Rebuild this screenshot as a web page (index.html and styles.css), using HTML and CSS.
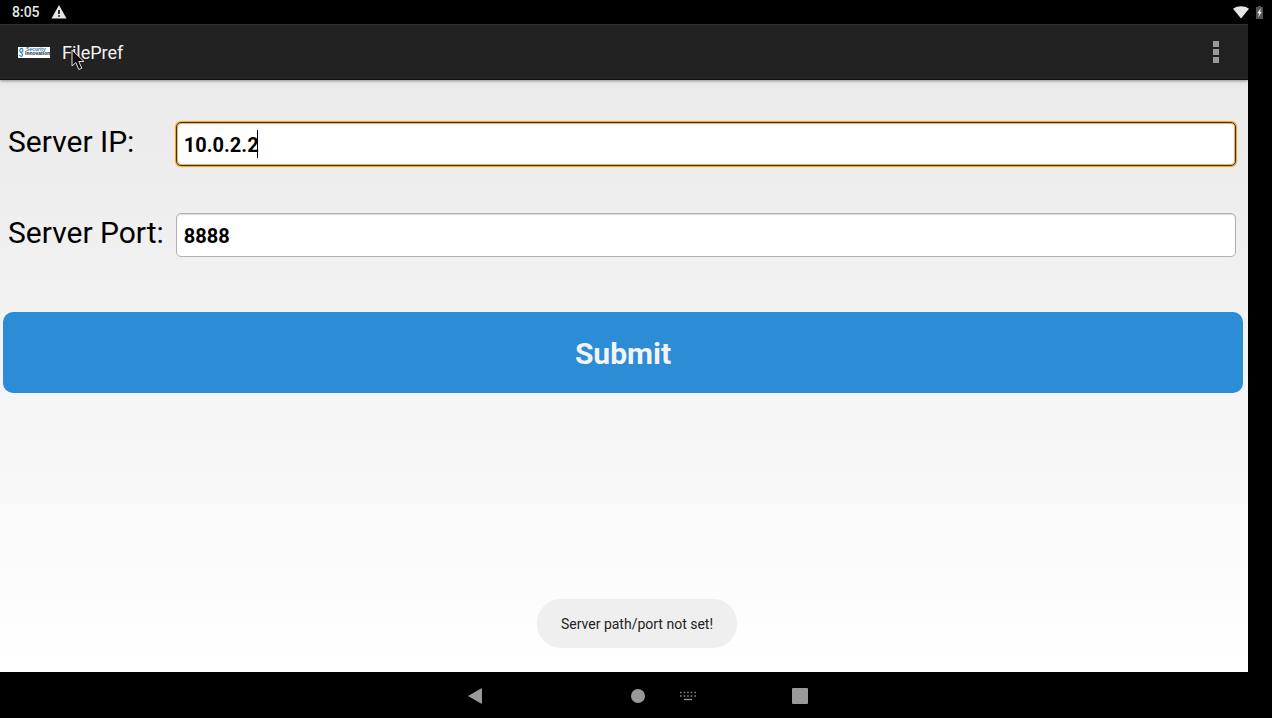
FILE: index.html
```html
<!DOCTYPE html>
<html lang="en">
<head>
  <meta charset="UTF-8" />
  <meta name="viewport" content="width=device-width, initial-scale=1.0" />
  <title>FilePref</title>
  <link rel="stylesheet" href="styles.css">
</head>
<body>
  <div class="status-bar">
    <span class="clock">8:05</span>
    <svg class="warning" width="16" height="14" viewBox="0 0 16 14">
      <path fill="#e6e6e6" fill-rule="evenodd" d="M8 0L15.500 13.500H.5zM7.200 5v4h1.600V5zM7.200 10.200v1.600h1.600v-1.600z"/>
    </svg>
    <svg class="wifi" width="16" height="13" viewBox="0 0 16 13">
      <path fill="#e6e6e6" d="M0 2.800C4.500-.5 11.500-.5 16 2.800L8 12.500z"/>
    </svg>
    <svg class="battery" width="7" height="13" viewBox="0 0 7 13">
      <path fill="#555" d="M2 0h3v1h2v12H0V1h2z"/>
      <path fill="#eee" d="M4.800 2L1.200 7.300h1.800L2.300 11.500l3.500-5.700H4z"/>
    </svg>
  </div>

  <div class="app">
    <header class="action-bar">
      <svg class="logo" width="32" height="11" viewBox="0 0 32 11">
        <rect width="32" height="11" fill="#fff"/>
        <path fill="none" stroke="#2581bd" stroke-width="1.200" d="M5 1.500C2.500.8 1 3 2.200 4.600S5 6.500 4.500 8.200 2 9.500 1.500 7.800M2.500 5.500C5.500 5 5.500 2.500 4 2.500"/>
        <text class="logo-top" x="8" y="4">Security</text>
        <text class="logo-bottom" x="7" y="8">Innovation</text>
      </svg>
      <h1>FilePref</h1>
      <button class="menu" aria-label="More options">
        <svg width="6" height="22" viewBox="0 0 6 22">
          <path fill="#999" d="M0 0h6v6H0zM0 8h6v6H0zM0 16h6v6H0z"/>
        </svg>
      </button>
      <svg class="pointer" width="15" height="22" viewBox="0 0 15 22">
        <path fill="#111" stroke="#ddd" d="M1 1v16l3.800-3.500 3 7 3-1.300-3-6.700H13z"/>
      </svg>
    </header>

    <form class="prefs" onsubmit="return false">
      <div class="fields">
        <label for="ip">Server IP:</label>
        <div class="field">
          <input class="focused" type="text" id="ip" value="10.0.2.2">
          <span class="caret"></span>
        </div>
        <label for="port">Server Port:</label>
        <div class="field">
          <input type="text" id="port" value="8888">
        </div>
      </div>
      <button class="submit">Submit</button>
    </form>
  </div>

  <nav class="nav-bar">
    <div class="toast" role="status">Server path/port not set!</div>
    <button class="back" aria-label="Back">
      <svg width="24" height="24" viewBox="0 0 24 24"><path fill="#999" d="M4 12L17 4.500Q18 4 18 5v14q0 1-1 .5z"/></svg>
    </button>
    <button class="home" aria-label="Home">
      <svg width="24" height="24" viewBox="0 0 24 24"><circle cx="12" cy="12" r="7" fill="#999"/></svg>
    </button>
    <button class="keyboard" aria-label="Keyboard">
      <svg width="24" height="24" viewBox="0 0 24 24">
        <path stroke="#888" stroke-width="1.500" stroke-dasharray="1.500 2.100" d="M4 8.500h16M4 12h16"/>
        <path stroke="#999" stroke-width="1.300" d="M8 15.500h8"/>
      </svg>
    </button>
    <button class="recents" aria-label="Recent apps">
      <svg width="24" height="24" viewBox="0 0 24 24"><rect x="4" y="4" width="16" height="16" rx="1" fill="#999"/></svg>
    </button>
  </nav>
</body>
</html>
```
FILE: styles.css
```css
* {
  box-sizing: border-box;
}
body {
  margin: 0;
  min-height: 100vh;
  display: flex;
  flex-direction: column;
  background: #000;
  font-family: Roboto, sans-serif;
}
button {
  padding: 0;
  border: none;
  background: none;
  font-family: inherit;
  cursor: pointer;
}
svg {
  display: block;
}

/* status bar */
.status-bar {
  display: flex;
  align-items: center;
  height: 24px;
  padding: 0 9px 0 12px;
  color: #e6e6e6;
}
.clock {
  font-size: 14px;
  font-weight: 500;
}
.warning {
  margin-left: 11px;
}
.wifi {
  margin-left: auto;
  margin-right: 7px;
}

/* app window */
.app {
  flex: 1;
  display: flex;
  flex-direction: column;
  margin-right: 24px;
  background: linear-gradient(#e8e8e8, #fff);
}
.action-bar {
  position: relative;
  display: flex;
  align-items: center;
  height: 56px;
  padding: 0 29px 0 18px;
  background: #222;
  border-top: 1px solid #303030;
  border-bottom: 1px solid #111;
  box-shadow: 0 1px 3px rgba(0,0,0,0.4);
}
.action-bar h1 {
  margin: 0 0 0 12px;
  font-size: 18px;
  font-weight: 400;
  color: #f3f3f3;
}
.logo-top,
.logo-bottom {
  font-family: "Liberation Sans", sans-serif;
  font-size: 5px;
  font-weight: bold;
}
.logo-top {
  fill: #2581bd;
}
.logo-bottom {
  fill: #222;
}
.menu {
  margin-left: auto;
}
.pointer {
  position: absolute;
  left: 71px;
  top: 24px;
}

/* form */
.prefs {
  padding: 42px 5px 0 3px;
}
.fields {
  display: grid;
  grid-template-columns: auto 1fr;
  column-gap: 12px;
  row-gap: 47px;
  padding: 0 7px 0 5px;
}
.fields label {
  font-size: 30px;
  line-height: 40px;
}
.field {
  position: relative;
}
.field input {
  display: block;
  width: 100%;
  height: 44px;
  padding: 2px 7px 0;
  border: 1px solid #b0b0b0;
  border-radius: 5px;
  background: #fff;
  box-shadow: inset 0 1px 1px rgba(0,0,0,0.15);
  font-family: inherit;
  font-size: 20px;
  font-weight: bold;
  color: #000;
  outline: none;
}
.field input.focused {
  border-color: #4a3204;
  box-shadow: 0 0 1px 1px #f0a21c, inset 0 0 1px 1px rgba(150,100,10,0.5);
}
.caret {
  position: absolute;
  left: 81px;
  top: 8px;
  width: 1px;
  height: 28px;
  background: #000;
}
.submit {
  display: block;
  width: 100%;
  height: 81px;
  margin-top: 55px;
  padding-top: 2px;
  border-radius: 10px;
  background: #2c8cd6;
  font-size: 30px;
  font-weight: bold;
  color: #f3f3f3;
}

/* navigation bar */
.nav-bar {
  position: relative;
  display: flex;
  justify-content: center;
  align-items: center;
  height: 46px;
  padding: 2px 0 0 4px;
}
.home {
  margin-left: 138px;
}
.keyboard {
  margin-left: 26px;
}
.recents {
  margin-left: 88px;
}
.toast {
  position: absolute;
  left: 50%;
  bottom: 70px;
  transform: translateX(-50%);
  margin-left: 1px;
  padding: 17px 24px 15px;
  border-radius: 24px;
  background: #efefef;
  font-size: 14px;
  line-height: 17px;
  white-space: nowrap;
  color: #222;
}
```
